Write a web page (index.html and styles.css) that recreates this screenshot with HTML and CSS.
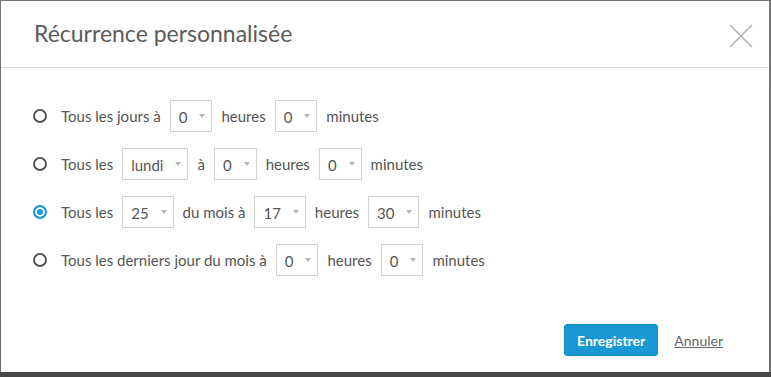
FILE: index.html
```html
<!DOCTYPE html>
<html lang="fr">
<head>
  <meta charset="UTF-8">
  <title>Récurrence personnalisée</title>
  <link rel="stylesheet" href="styles.css">
</head>
<body>
  <div class="modal">
    <div class="modal-header">
      <h1>Récurrence personnalisée</h1>
      <button class="close" aria-label="Fermer">
        <svg width="24" height="24" viewBox="0 0 24 24">
          <path d="M1 1 L23 23 M23 1 L1 23" stroke="#b3b3b3" stroke-width="1.6" fill="none"/>
        </svg>
      </button>
    </div>

    <div class="modal-body">
      <!-- every day -->
      <label class="row">
        <span class="radio"></span>
        <span>Tous les jours à</span>
        <span class="select"><span class="val">0</span><span class="caret"></span></span>
        <span>heures</span>
        <span class="select"><span class="val">0</span><span class="caret"></span></span>
        <span>minutes</span>
      </label>

      <!-- every week -->
      <label class="row">
        <span class="radio"></span>
        <span>Tous les</span>
        <span class="select"><span class="val">lundi</span><span class="caret"></span></span>
        <span>à</span>
        <span class="select"><span class="val">0</span><span class="caret"></span></span>
        <span>heures</span>
        <span class="select"><span class="val">0</span><span class="caret"></span></span>
        <span>minutes</span>
      </label>

      <!-- every month -->
      <label class="row">
        <span class="radio checked"></span>
        <span>Tous les</span>
        <span class="select"><span class="val">25</span><span class="caret"></span></span>
        <span>du mois à</span>
        <span class="select"><span class="val">17</span><span class="caret"></span></span>
        <span>heures</span>
        <span class="select"><span class="val">30</span><span class="caret"></span></span>
        <span>minutes</span>
      </label>

      <!-- last day of month -->
      <label class="row">
        <span class="radio"></span>
        <span>Tous les derniers jour du mois à</span>
        <span class="select"><span class="val">0</span><span class="caret"></span></span>
        <span>heures</span>
        <span class="select"><span class="val">0</span><span class="caret"></span></span>
        <span>minutes</span>
      </label>
    </div>

    <div class="modal-footer">
      <button class="btn-primary">Enregistrer</button>
      <a href="#" class="cancel">Annuler</a>
    </div>
  </div>
</body>
</html>
```

FILE: styles.css
```css
html, body {
  height: 100%;
}
body {
  margin: 0;
  padding: 1px 2px 0 1px;
  box-sizing: border-box;
  background: linear-gradient(to bottom, #767676 0, #6e6e6e 372px, #474747 372px);
  font-family: Lato, "Noto Sans", sans-serif;
  color: #555;
}
.modal {
  background: #fff;
  height: 371px;
}
.modal-header {
  height: 66px;
  border-bottom: 1px solid #dcdcdc;
  display: flex;
  align-items: center;
  justify-content: space-between;
  padding: 0 16px 0 33px;
}
.modal-header h1 {
  margin: 0;
  font-size: 23px;
  font-weight: normal;
  color: #5c5c5c;
  position: relative;
  top: -1px;
}
.close {
  background: none;
  border: 0;
  padding: 0;
  width: 24px;
  height: 24px;
  cursor: pointer;
  position: relative;
  top: 2px;
}
.modal-body {
  padding: 32px 33px 0 32px;
  display: flex;
  flex-direction: column;
  gap: 16px;
}
.row {
  display: flex;
  align-items: center;
  gap: 9px;
  height: 32px;
  font-size: 15px;
  color: #555;
}
.radio {
  width: 14px;
  height: 14px;
  border: 2px solid #555;
  border-radius: 50%;
  box-sizing: border-box;
  margin-right: 5px;
  flex-shrink: 0;
}
.radio.checked {
  border-color: #1a98d5;
  background: #1a98d5;
  box-shadow: inset 0 0 0 2px #fff;
}
.select {
  display: flex;
  align-items: center;
  gap: 12px;
  height: 32px;
  box-sizing: border-box;
  border: 1px solid #d2d2d2;
  padding: 2px 6px 0 8px;
  color: #555;
  line-height: 1;
}
.caret {
  width: 0;
  height: 0;
  border-left: 3.5px solid transparent;
  border-right: 3.5px solid transparent;
  border-top: 4px solid #b5b5b5;
  margin-top: -2px;
}
.modal-footer {
  margin-top: 48px;
  display: flex;
  justify-content: flex-end;
  align-items: center;
  gap: 16px;
  padding-right: 46px;
}
.btn-primary {
  height: 32px;
  padding: 0 12px;
  background: #1a98d5;
  border: 1px solid #1589c1;
  border-radius: 3px;
  color: #fff;
  font-family: Lato, "Noto Sans", sans-serif;
  font-size: 14px;
  font-weight: bold;
  cursor: pointer;
}
.cancel {
  color: #666;
  font-size: 14px;
  text-decoration: underline;
}
```
